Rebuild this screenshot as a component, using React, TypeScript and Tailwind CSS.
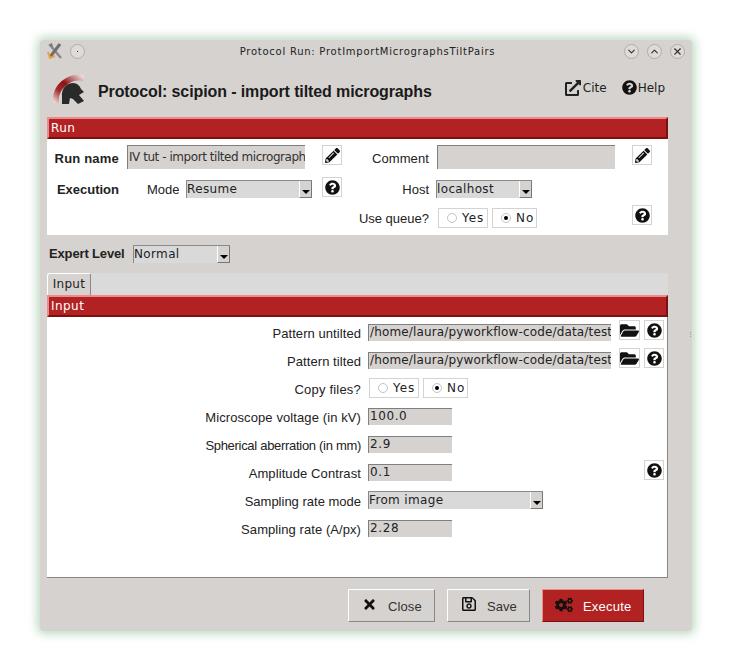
import React from "react";
import {
  FaPencilAlt,
  FaQuestionCircle,
  FaFolderOpen,
  FaTimes,
  FaRegSave,
  FaCogs,
  FaExternalLinkAlt,
} from "react-icons/fa";
import { ChevronDown, ChevronUp, X } from "lucide-react";

const dejavu = "font-['DejaVu_Sans',sans-serif]";

function IconButton({ children }: { children: React.ReactNode }) {
  return (
    <div className="w-[20px] h-[20px] bg-white border border-[#d6d2d0] flex items-center justify-center text-[#111] text-[15px]">
      {children}
    </div>
  );
}

function Field({ value, w, track }: { value: string; w: string; track: string }) {
  return (
    <div
      className={`${w} ${track} ${dejavu} h-[17px] bg-[#d6d2d0] border-t border-l border-[#7f7f7f] pl-[1px] text-[12px] leading-[15px] text-[#222] overflow-hidden whitespace-nowrap`}
    >
      {value}
    </div>
  );
}

function Select({ value, w }: { value: string; w: string }) {
  return (
    <div className={`${w} ${dejavu} h-[18px] bg-[#d9d9d9] border-l border-t border-[#8a8a8a] flex items-center justify-between text-[12px] text-[#222] tracking-[0.35px]`}>
      <span className="-mt-[1px]">{value}</span>
      <div className="w-[13px] h-[17px] bg-[#d6d2d0] border-r border-b border-[#777] border-l border-l-white flex items-end justify-center pb-[3px]">
        <div className="w-0 h-0 border-l-[4px] border-r-[4px] border-t-[4px] border-l-transparent border-r-transparent border-t-black" />
      </div>
    </div>
  );
}

function Radio({ label, on, w }: { label: string; on?: boolean; w: string }) {
  return (
    <div className={`${w} ${dejavu} h-[20px] bg-white border border-[#d6d2d0] flex items-center pl-[8px] gap-[5px] text-[12px] text-[#222] tracking-[0.9px]`}>
      <span className="w-[10px] h-[10px] rounded-full border border-[#c4c4c4] flex items-center justify-center">
        {on && <span className="w-[4px] h-[4px] rounded-full bg-black" />}
      </span>
      {label}
    </div>
  );
}

function SectionBar({ title }: { title: string }) {
  return (
    <div className={`${dejavu} h-[22px] bg-[#b22222] border-t-2 border-t-[#ee8a8a] border-b-2 border-b-[#7a1010] border-l-2 border-l-[#ee8a8a] border-r-2 border-r-[#7a1010] text-white text-[12px] leading-[18px] pl-[2px] tracking-[0.45px]`}>
      {title}
    </div>
  );
}

function FormRow({
  label,
  track = "tracking-[0.07px]",
  children,
}: {
  label: string;
  track?: string;
  children: React.ReactNode;
}) {
  return (
    <div className="h-[28px] flex items-center">
      <div className={`${track} w-[315px] text-right text-[13px] text-[#222] pr-[1px] pt-[4px]`}>{label}</div>
      <div className="ml-[6px] flex-1 flex items-center">{children}</div>
    </div>
  );
}

function Logo() {
  return (
    <svg width="36" height="34" viewBox="0 0 36 34">
      <defs>
        <linearGradient id="arc" x1="0" y1="1" x2="1" y2="0">
          <stop offset="0" stopColor="#eed2d2" />
          <stop offset="0.3" stopColor="#a02a2a" />
          <stop offset="0.55" stopColor="#8f1414" />
          <stop offset="1" stopColor="#ecdada" />
        </linearGradient>
      </defs>
      <path d="M4 30 C2 14 17 2 32 5" stroke="url(#arc)" strokeWidth="6" fill="none" />
      <path
        d="M10 24 C9 15 15 10 21 10 C25 10 28 13 29 16 L32 19 L27 22 L32 28 L26 31 L21 26 L18 25 L17 31 L10 31 Z"
        fill="#2a2a2a"
      />
    </svg>
  );
}

function AppIcon() {
  return (
    <svg width="16" height="18" viewBox="0 0 16 18">
      <path d="M3 3 L14 16" stroke="#8a8a8a" strokeWidth="2.5" />
      <path d="M13 2 L3 15" stroke="#6f6f6f" strokeWidth="3" />
      <path d="M1 10 L3 16 L8 14" stroke="#e8a33d" strokeWidth="2" fill="none" />
      <path d="M1 3 L5 1 L6 5 Z" fill="#777" />
    </svg>
  );
}

function WinButton({ children }: { children?: React.ReactNode }) {
  return (
    <div className="w-[15px] h-[15px] rounded-full bg-[#dedbd9] border border-[#b0acaa] flex items-center justify-center text-[#333]">
      {children}
    </div>
  );
}

function HelpButton() {
  return (
    <IconButton>
      <FaQuestionCircle />
    </IconButton>
  );
}

function PathRow({ label }: { label: string }) {
  return (
    <FormRow label={label}>
      <Field value="/home/laura/pyworkflow-code/data/test" w="w-[243px]" track="tracking-[0.15px]" />
      <div className="ml-[8px] -mt-[4px] w-[21px] h-[20px] bg-white border border-[#d6d2d0] flex items-center justify-center text-[#111] text-[19px]">
        <FaFolderOpen />
      </div>
      <div className="ml-[4px] -mt-[4px]">
        <HelpButton />
      </div>
    </FormRow>
  );
}

export default function App() {
  return (
    <div className="w-[732px] h-[671px] bg-white pt-[40px] pl-[40px] overflow-hidden font-['Liberation_Sans',sans-serif]">
      <div className="relative w-[652px] h-[591px] bg-[#d6d2d0] rounded-[4px] shadow-[0_0_10px_3px_rgba(110,170,120,0.45)] flex flex-col">
        {/* Title bar */}
        <div className="h-[22px] flex items-center px-[7px]">
          <AppIcon />
          <div className="ml-[7px]">
            <WinButton>
              <span className="w-[1px] h-[1px] bg-[#333]" />
            </WinButton>
          </div>
          <div className={`${dejavu} flex-1 pl-[26px] text-center text-[10px] text-[#222] tracking-[0.75px]`}>
            Protocol Run: ProtImportMicrographsTiltPairs
          </div>
          <div className="flex gap-[8px]">
            <WinButton>
              <ChevronDown size={11} strokeWidth={2.5} />
            </WinButton>
            <WinButton>
              <ChevronUp size={11} strokeWidth={2.5} />
            </WinButton>
            <WinButton>
              <X size={11} strokeWidth={2.5} />
            </WinButton>
          </div>
        </div>

        {/* Header */}
        <div className="h-[55px] flex items-center pl-[12px] pr-[27px]">
          <Logo />
          <div className="ml-[10px] mt-[4px] text-[16px] font-bold text-[#1a1a1a] tracking-[-0.11px]">
            Protocol: scipion - import tilted micrographs
          </div>
          <div className={`${dejavu} ml-auto -mt-[4px] flex items-center text-[12px] text-[#222]`}>
            <FaExternalLinkAlt className="text-[16px] text-[#222]" />
            <span className="ml-[2px]">Cite</span>
            <FaQuestionCircle className="ml-[15px] text-[15px] text-[#111]" />
            <span className="ml-[1px]">Help</span>
          </div>
        </div>

        {/* Run section */}
        <div className="ml-[7px] w-[621px]">
          <SectionBar title="Run" />
          <div className="h-[96px] bg-white grid grid-cols-[72px_203px_20px_87px_203px_20px] grid-rows-[33px_30px_25px] pt-[6px] text-[13px] text-[#222]">
            <div className="text-right font-bold mt-[4px] tracking-[0.2px]">Run name</div>
            <div className="pl-[8px]">
              <div className={`${dejavu} w-[178px] h-[24px] bg-[#d6d2d0] border-t border-l border-[#7f7f7f] pl-[1px] text-[12px] leading-[22px] tracking-[-0.45px] overflow-hidden whitespace-nowrap text-[#333]`}>
                IV tut - import tilted micrograph
              </div>
            </div>
            <IconButton>
              <FaPencilAlt />
            </IconButton>
            <div className="text-right mt-[4px] tracking-[0.1px]">Comment</div>
            <div className="pl-[8px]">
              <div className="w-[178px] h-[24px] bg-[#d6d2d0] border-t border-l border-[#7f7f7f]" />
            </div>
            <IconButton>
              <FaPencilAlt />
            </IconButton>

            <div className="text-right font-bold mt-[2px]">Execution</div>
            <div className="flex pl-[28px] items-start">
              <span className="mt-[2px] w-[39px]">Mode</span>
              <div className="mt-[2px]">
                <Select value="Resume" w="w-[126px]" />
              </div>
            </div>
            <div className="-mt-[1px]">
              <HelpButton />
            </div>
            <div className="text-right mt-[2px]">Host</div>
            <div className="pl-[7px] pt-[2px]">
              <Select value="localhost" w="w-[96px]" />
            </div>
            <div />

            <div />
            <div />
            <div />
            <div className="text-right mt-[1px]">Use queue?</div>
            <div className="flex gap-[4px] pl-[9px]">
              <Radio label="Yes" w="w-[50px]" />
              <Radio label="No" on w="w-[45px]" />
            </div>
            <div className="-mt-[3px]">
              <HelpButton />
            </div>
          </div>
        </div>

        {/* Expert level */}
        <div className="h-[38px] flex items-center pl-[9px]">
          <span className="w-[76px] whitespace-nowrap text-[13px] font-bold text-[#222] tracking-[-0.15px]">Expert Level</span>
          <div className="ml-[8px]">
            <Select value="Normal" w="w-[97px]" />
          </div>
        </div>

        {/* Tabs + input */}
        <div className="ml-[7px] w-[621px]">
          <div className="h-[22px] bg-[#dadada] flex items-end">
            <div className={`${dejavu} w-[44px] h-[22px] bg-[#d6d2d0] border border-b-0 border-white border-r-[#888] rounded-t-[3px] text-center text-[12px] leading-[20px] text-[#222] tracking-[0.3px]`}>
              Input
            </div>
          </div>
          <SectionBar title="Input" />
          <div className="h-[261px] bg-white border-b border-r border-[#888] pt-[1px]">
            <PathRow label="Pattern untilted" />
            <PathRow label="Pattern tilted" />
            <FormRow label="Copy files?" track="tracking-[0.2px]">
              <div className="ml-[1px] flex gap-[4px]">
                <Radio label="Yes" w="w-[50px]" />
                <Radio label="No" on w="w-[45px]" />
              </div>
            </FormRow>
            <FormRow label="Microscope voltage (in kV)" track="tracking-[0.1px]">
              <Field value="100.0" w="w-[84px]" track="tracking-[0.6px]" />
            </FormRow>
            <FormRow label="Spherical aberration (in mm)" track="tracking-[-0.3px]">
              <Field value="2.9" w="w-[84px]" track="tracking-[0.6px]" />
            </FormRow>
            <FormRow label="Amplitude Contrast" track="tracking-[0.1px]">
              <Field value="0.1" w="w-[84px]" track="tracking-[0.6px]" />
              <div className="ml-[192px] -mt-[4px]">
                <HelpButton />
              </div>
            </FormRow>
            <FormRow label="Sampling rate mode" track="">
              <Select value="From image" w="w-[175px]" />
            </FormRow>
            <FormRow label="Sampling rate (A/px)">
              <Field value="2.28" w="w-[84px]" track="tracking-[0.6px]" />
            </FormRow>
          </div>
        </div>

        {/* Buttons */}
        <div className="flex-1 flex items-start pt-[11px] pl-[308px] gap-[12px] text-[13px]">
          <div className="w-[87px] h-[33px] bg-[#d6d2d0] border border-white border-r-[#888] border-b-[#888] flex items-center pl-[13px] text-[#333]">
            <FaTimes className="text-[15px] text-[#111] -mt-[3px]" />
            <span className="ml-[11px] mt-[3px] tracking-[0.1px]">Close</span>
          </div>
          <div className="w-[83px] h-[33px] bg-[#d6d2d0] border border-white border-r-[#888] border-b-[#888] flex items-center pl-[13px] text-[#333]">
            <FaRegSave className="text-[16px] text-[#111] -mt-[3px]" />
            <span className="ml-[10px] mt-[3px]">Save</span>
          </div>
          <div className="w-[102px] h-[33px] bg-[#b22222] border border-[#ee8a8a] border-r-[#7a1010] border-b-[#7a1010] flex items-center pl-[12px] text-white">
            <FaCogs className="text-[18px] text-[#111] -mt-[2px]" />
            <span className="ml-[10px] mt-[3px] tracking-[0.2px]">Execute</span>
          </div>
        </div>

        {/* Resize grip on the window edge */}
        <div className="absolute right-[1px] top-[292px] flex flex-col gap-[1px]">
          <span className="w-[1px] h-[1px] bg-[#999]" />
          <span className="w-[1px] h-[1px] bg-[#999]" />
          <span className="w-[1px] h-[1px] bg-[#999]" />
        </div>
      </div>
    </div>
  );
}
